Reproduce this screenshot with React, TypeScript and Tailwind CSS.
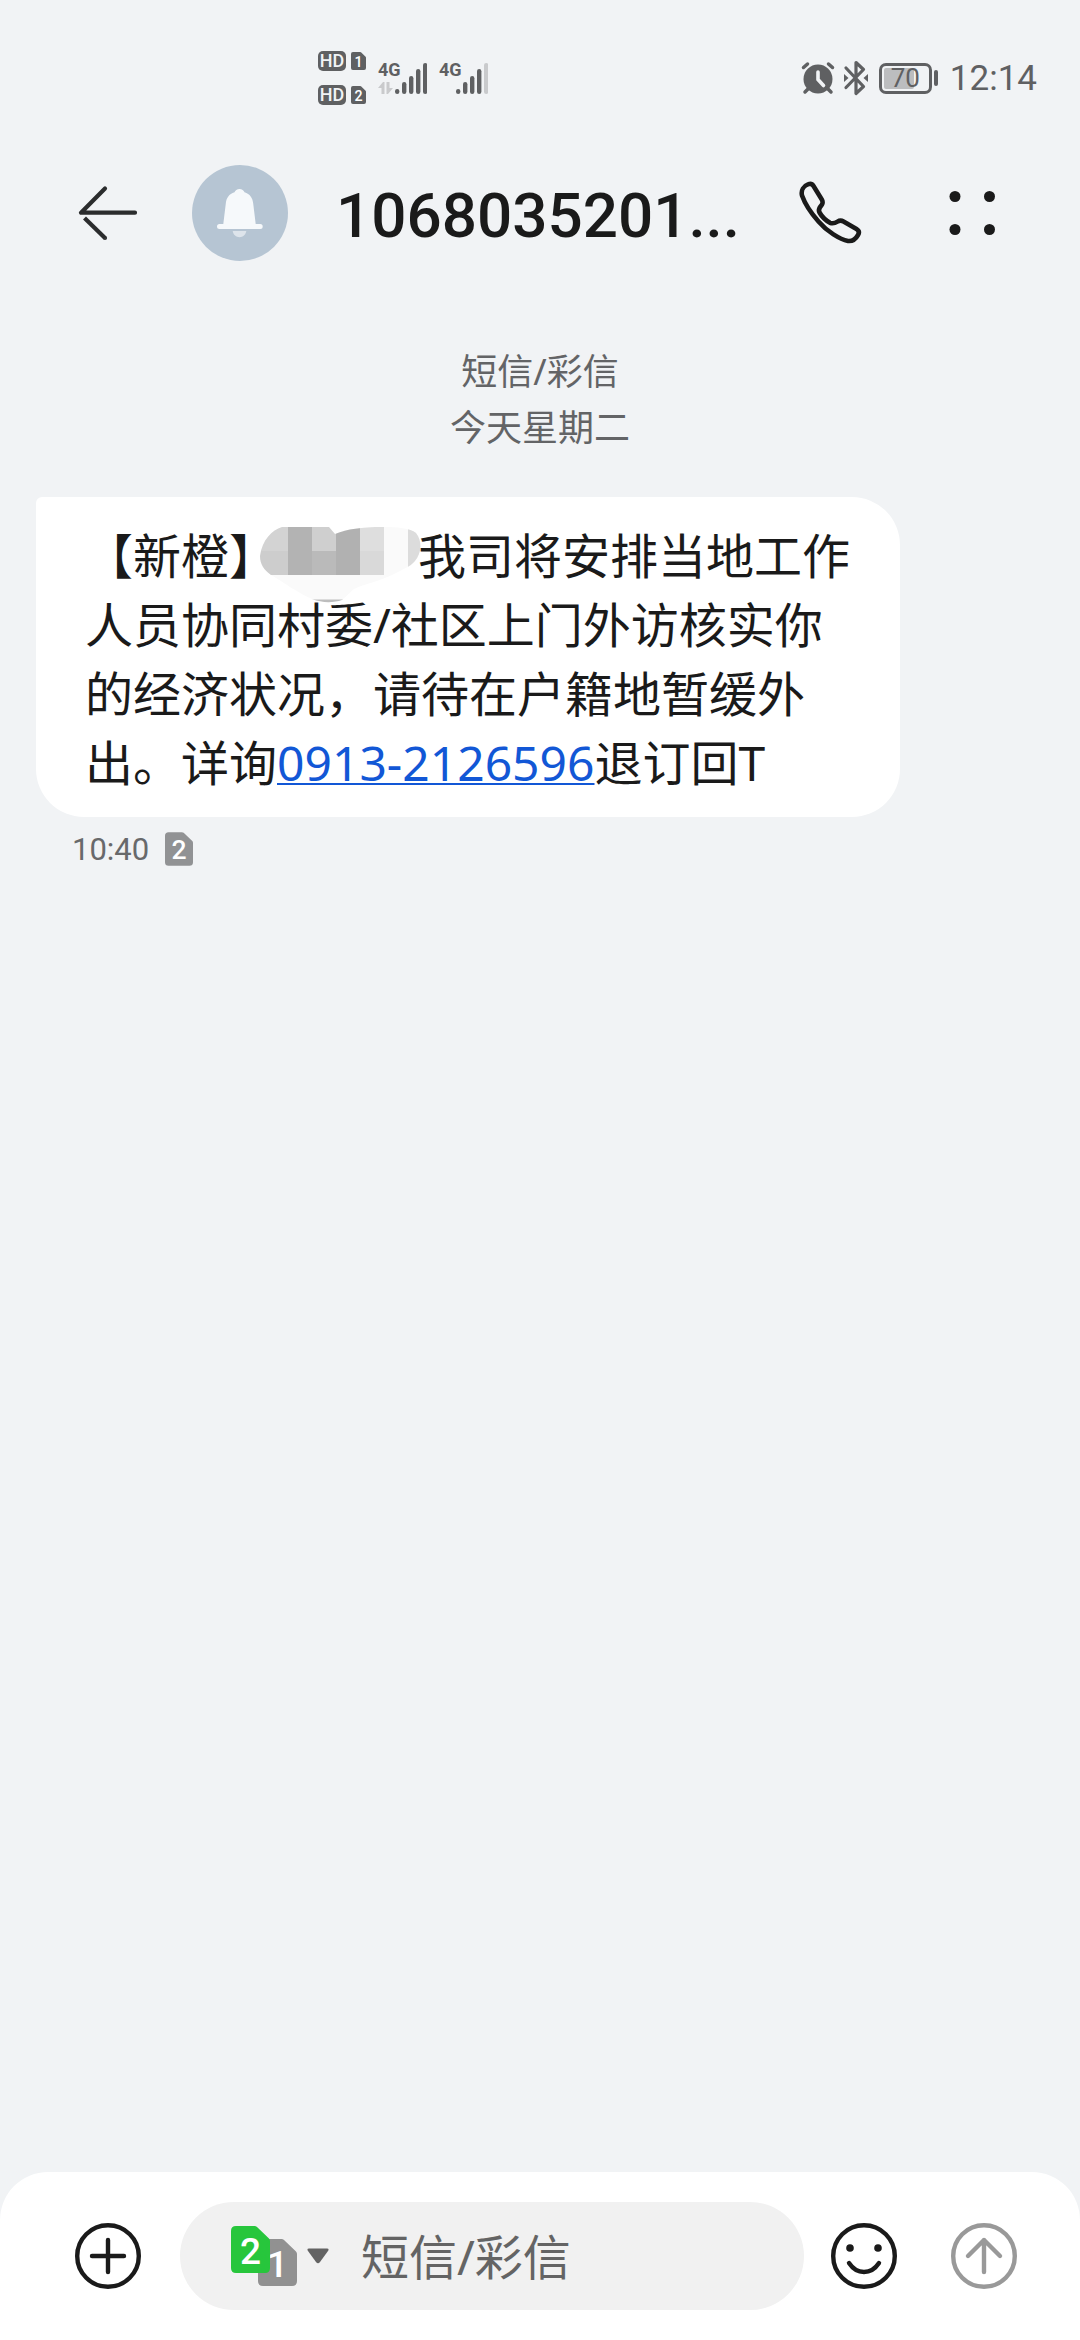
import { useState } from 'react'
import type { ReactNode } from 'react'
import clsx from 'clsx'

interface SimChipProps {
  slot: 1 | 2
  className: string
}

// SIM card shape with a cut corner and the slot number on it
function SimChip({ slot, className }: SimChipProps) {
  return (
    <svg viewBox="0 0 39 47" className={clsx('overflow-visible', className)} aria-label={`SIM ${slot}`}>
      <path
        d="M5 0H23.500Q25 0 26 1L38 12.500Q39 13.500 39 15V42Q39 47 34 47H5Q0 47 0 42V5Q0 0 5 0Z"
        fill="currentColor"
      />
      <text
        x="19.500"
        y="38"
        textAnchor="middle"
        fontSize="37"
        fontWeight="500"
        fill="#fff"
        className="font-['Roboto',sans-serif]"
      >
        {slot}
      </text>
    </svg>
  )
}

function HdBadge({ slot }: { slot: 1 | 2 }) {
  return (
    <div className="flex items-center gap-[5px]">
      <span className="flex h-5 w-7 items-center justify-center rounded-[5px] bg-[#5f6062] font-['Roboto',sans-serif] text-lg font-medium leading-5 text-[#f1f3f5]">
        HD
      </span>
      <SimChip slot={slot} className="h-5 w-[15px] text-[#5f6062]" />
    </div>
  )
}

interface SignalProps {
  level: number
  traffic?: boolean
}

function Signal({ level, traffic }: SignalProps) {
  const bars = [5, 12, 18, 25, 31]
  return (
    <div className="flex h-8 items-end">
      <div className="flex h-8 w-[17px] flex-col items-start justify-between">
        <span className="font-['Liberation_Sans_Narrow','Roboto',sans-serif] text-lg font-bold leading-4">4G</span>
        {traffic && (
          <svg viewBox="0 0 15 12" className="h-3 w-[15px]" fill="#c9cacc">
            <path d="M0 6L5 0H6.500V12H3.500V6ZM8.500 0H11.500V6H15L10 12H8.500Z" />
          </svg>
        )}
      </div>
      <svg viewBox="0 0 32 32" className="h-8 w-8">
        {bars.map((h, i) => (
          <rect
            key={h}
            x={i * 7}
            y={32 - h}
            width="4.400"
            height={h}
            rx="2.200"
            fill={i < level ? '#5f6062' : '#c9cacc'}
          />
        ))}
      </svg>
    </div>
  )
}

function StatusBar() {
  return (
    <div className="flex h-[156px] items-center justify-between pl-[318px] pr-[43px] font-['Roboto',sans-serif] text-[#5f6062]">
      <div className="flex items-center gap-3">
        <div className="flex flex-col gap-[14px]">
          <HdBadge slot={1} />
          <HdBadge slot={2} />
        </div>
        <Signal level={5} traffic />
        <Signal level={4} />
      </div>
      <div className="flex items-center">
        <svg viewBox="0 0 34 34" className="h-[34px] w-[34px]" stroke="currentColor" strokeLinecap="round">
          <circle cx="17" cy="18" r="14.500" fill="currentColor" stroke="none" />
          <path d="M2.500 6.500L6.500 3M31.500 6.500L27.500 3M7 28L4 31M27 28L30 31" strokeWidth="3.500" />
          <path d="M17 11V18.500L22.500 24.500" stroke="#f1f3f5" strokeWidth="3.600" fill="none" />
        </svg>
        <svg viewBox="0 0 26 36" className="ml-2 h-9 w-[26px]" fill="none" stroke="currentColor">
          <path
            d="M3 8L20.500 26.500L13 33.500V2.500L20.500 9.500L3 27.500"
            strokeWidth="3.200"
            strokeLinecap="round"
            strokeLinejoin="round"
          />
          <path d="M1 14L5.500 18L1 22ZM25 14L20.500 18L25 22Z" fill="currentColor" stroke="none" />
        </svg>
        <div className="ml-[10px] flex h-[31px] w-[53px] items-center rounded-[7px] border-[3px] border-current p-[2px]">
          <div className="relative flex h-full w-full items-center justify-center">
            <span className="absolute inset-y-0 left-0 w-[70%] rounded-[2px] bg-[#bcbdbf]" />
            <span className="relative text-[26px] leading-none">70</span>
          </div>
        </div>
        <span className="ml-[2px] h-4 w-1 rounded-full bg-current" />
        <span className="ml-3 text-[35px] leading-none">12:14</span>
      </div>
    </div>
  )
}

function BellAvatar() {
  return (
    <svg viewBox="0 0 96 96" className="h-24 w-24">
      <circle cx="48" cy="48" r="48" fill="#b6c5d3" />
      <path
        d="M47.500 24C50 24 51.700 25.400 52.500 27.300C58 29 60.600 33 61.200 38.500L63.700 59H68.200A2.500 2.500 0 0 1 68.200 64H27.500A2.500 2.500 0 0 1 27.500 59H31.300L33.800 38.500C34.400 33 37 29 42.500 27.300C43.300 25.400 45 24 47.500 24Z"
        fill="#f6f9fb"
      />
      <path d="M40.700 66H54.300C53.500 70 51 72.200 47.500 72.200S41.500 70 40.700 66Z" fill="#dde4eb" />
    </svg>
  )
}

function ChatHeader({ title }: { title: string }) {
  return (
    <header className="flex h-[114px] items-center pl-[78px] pr-[85px] text-[#1a1a1a]">
      <button type="button" aria-label="返回" className="shrink-0">
        <svg viewBox="0 0 60 56" className="h-14 w-[60px]" fill="none" stroke="#2b2c2d" strokeWidth="4.200">
          <path d="M27 3.500L3 27.700H57" strokeLinecap="round" strokeLinejoin="round" />
          <path d="M27 53L6.500 33" />
          <circle cx="27" cy="53" r="1.200" strokeWidth="1.800" />
        </svg>
      </button>
      <div className="ml-[54px] shrink-0">
        <BellAvatar />
      </div>
      <h1 className="ml-12 min-w-0 flex-1 whitespace-nowrap pt-[6px] font-['Roboto',sans-serif] text-[62px] font-medium leading-none">
        {title}
      </h1>
      <button type="button" aria-label="拨打电话" className="shrink-0">
        <svg viewBox="0 0 64 64" className="h-16 w-16" fill="none" stroke="currentColor" strokeWidth="4.600">
          <path d="M10.500 3.200C12.500 2.400 14.500 3.400 15.500 5L23.800 18.500C25 20.500 25 21.500 24 23.500C21.500 26.500 20 28.500 21.500 31.500C23.500 35 28 39.500 32 41.800C35 43 37 42.200 39.500 40.600C41.500 39.300 43.500 39.300 45.500 40.500L58.500 48C61 49.500 61.500 51.500 60 54C58 57.500 54.500 60.500 50 60C42 58.500 29 50.500 20.500 40.500C12.500 31.500 6.500 21.500 4 14.500C2.800 9.500 5.500 5 10.500 3.200Z" />
        </svg>
      </button>
      <button type="button" aria-label="更多" className="ml-[87px] shrink-0">
        <svg viewBox="0 0 46 46" className="h-[46px] w-[46px]" fill="currentColor">
          <circle cx="6" cy="6.500" r="5.500" />
          <circle cx="40.500" cy="6.500" r="5.500" />
          <circle cx="6" cy="39.500" r="5.500" />
          <circle cx="40.500" cy="39.500" r="5.500" />
        </svg>
      </button>
    </header>
  )
}

// Pixelated smudge over the recipient's name
function Mosaic() {
  return (
    <svg
      viewBox="17 0 141 84"
      className="-mb-7 -mt-3 inline-block h-[84px] w-[141px] overflow-visible align-middle"
      aria-hidden="true"
    >
      <defs>
        <clipPath id="smudge">
          <path d="M0 29C2 13 12 3 22 0H69L75 7C88 2 100 0 123 0C138 0 150 1 156 6C163 15 161 27 155 34C150 40 143 42 132 48C120 54 104 57 94 62C88 67 86 70 82 73C73 76 62 76 52 72C38 66 23 55 11 48C4 43 0 37 0 29Z" />
        </clipPath>
      </defs>
      <g clipPath="url(#smudge)">
        <rect width="162" height="84" fill="#fafafa" />
        <rect width="28" height="24" fill="#d3d3d3" />
        <rect y="24" width="28" height="24" fill="#cdcdcd" />
        <rect x="28" width="24" height="48" fill="#b3b3b3" />
        <rect x="52" width="24" height="24" fill="#cfcfcf" />
        <rect x="52" y="24" width="24" height="24" fill="#bababa" />
        <rect x="76" width="24" height="48" fill="#b1b1b1" />
        <rect x="100" width="24" height="24" fill="#dedede" />
        <rect x="100" y="24" width="24" height="24" fill="#d9d9d9" />
        <rect x="148" width="14" height="48" fill="#dcdcdc" />
        <rect x="52" y="72.500" width="32" height="4" fill="#bdbdbd" />
      </g>
    </svg>
  )
}

function Message() {
  return (
    <article className="mt-[41px] pl-9">
      <p className="max-w-[864px] rounded-[48px] rounded-tl-[6px] bg-white pb-5 pl-[49px] pr-12 pt-6 text-5xl leading-[69px] text-[#1a1a1a]">
        【新橙】
        <Mosaic />
        我司将安排当地工作人员协同村委/社区上门外访核实你的经济状况，请待在户籍地暂缓外出。详询
        <a href="tel:0913-2126596" className="text-[#1257d6] underline decoration-2 underline-offset-2">
          0913-2126596
        </a>
        退订回T
      </p>
      <div className="mt-[15px] flex h-[34px] items-center gap-4 pl-9">
        <time className="font-['Roboto',sans-serif] text-[31px] leading-none text-[#68696b]">10:40</time>
        <SimChip slot={2} className="h-[34px] w-7 text-[#919294]" />
      </div>
    </article>
  )
}

interface RoundButtonProps {
  label: string
  className?: string
  children: ReactNode
}

function RoundButton({ label, className, children }: RoundButtonProps) {
  return (
    <button type="button" aria-label={label} className={clsx('shrink-0', className)}>
      <svg
        viewBox="0 0 66 66"
        className="h-[66px] w-[66px]"
        fill="none"
        stroke="currentColor"
        strokeWidth="4.400"
        strokeLinecap="round"
        strokeLinejoin="round"
      >
        <circle cx="33" cy="33" r="30.800" />
        {children}
      </svg>
    </button>
  )
}

function Composer() {
  const [text, setText] = useState('')

  return (
    <footer className="flex items-center rounded-t-[48px] bg-white py-[30px] pl-[75px] pr-[63px]">
      <RoundButton label="添加" className="text-[#1a1a1a]">
        <path d="M33 17V49M17 33H49" />
      </RoundButton>
      <div className="ml-[39px] flex h-[108px] min-w-0 flex-1 items-center rounded-full bg-[#f1f1f1] pl-[51px] pr-10">
        <button type="button" aria-label="切换 SIM 卡" className="flex shrink-0 items-center gap-[10px]">
          <span className="flex items-start">
            <SimChip slot={2} className="relative z-10 h-[47px] w-[39px] text-[#27c63c]" />
            <SimChip slot={1} className="-ml-3 mt-[13px] h-[47px] w-[39px] text-[#919191]" />
          </span>
          <svg viewBox="0 0 22 16" className="h-4 w-[22px]" fill="#636363">
            <path d="M2 .500H20Q22.500 .500 21 3L13 14Q11 16.500 9 14L1 3Q-.500 .500 2 .500Z" />
          </svg>
        </button>
        <input
          type="text"
          aria-label="短信/彩信"
          placeholder="短信/彩信"
          value={text}
          onChange={(e) => setText(e.target.value)}
          className="ml-8 min-w-0 flex-1 bg-transparent text-5xl leading-[69px] outline-none placeholder:text-[#646464]"
        />
      </div>
      <RoundButton label="表情" className="ml-[27px] text-[#1a1a1a]">
        <circle cx="19" cy="25" r="3.800" fill="currentColor" stroke="none" />
        <circle cx="47" cy="25" r="3.800" fill="currentColor" stroke="none" />
        <path d="M18 40C22 46 27 49 33 49S44 46 48 40" />
      </RoundButton>
      <RoundButton label="发送" className="ml-[54px] text-[#999]">
        <path d="M33 49V17M17 33L33 17L49 33" />
      </RoundButton>
    </footer>
  )
}

export default function App() {
  return (
    <div className="flex min-h-screen flex-col bg-[#f1f3f5] font-['Noto_Sans','Noto_Sans_CJK_SC',sans-serif]">
      <StatusBar />
      <ChatHeader title="1068035201..." />
      <main className="flex-1 pt-[74px]">
        <div className="text-center text-4xl leading-[56px] text-[#636466]">
          <p>短信/彩信</p>
          <p>今天星期二</p>
        </div>
        <Message />
      </main>
      <Composer />
    </div>
  )
}
